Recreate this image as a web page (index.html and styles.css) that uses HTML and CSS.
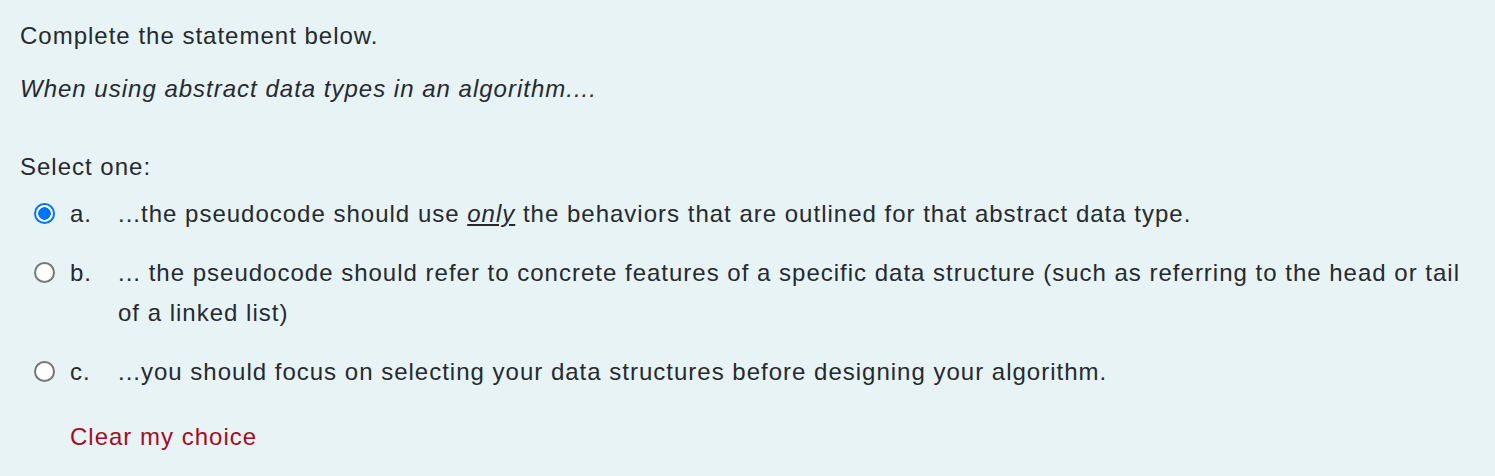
FILE: index.html
```html
<!DOCTYPE html>
<html>
<head lang="en">
    <meta charset="UTF-8">
    <title>Question</title>
    <link rel="stylesheet" href="styles.css">
</head>
<body>
    <div class="formulation">
        <div class="qtext">
            <p>Complete the statement below.</p>
            <p><em>When using abstract data types in an algorithm....</em></p>
        </div>
        <div class="ablock">
            <div class="prompt">Select one:</div>
            <div class="answer">
                <div class="row">
                    <span class="radio checked"></span>
                    <span class="letter">a.</span>
                    <div class="text">...the pseudocode should use <em><u>only</u></em> the behaviors that are outlined for that abstract data type.</div>
                </div>
                <div class="row">
                    <span class="radio"></span>
                    <span class="letter">b.</span>
                    <div class="text">... the pseudocode should refer to concrete features of a specific data structure (such as referring to the head or tail of a linked list)</div>
                </div>
                <div class="row">
                    <span class="radio"></span>
                    <span class="letter">c.</span>
                    <div class="text">...you should focus on selecting your data structures before designing your algorithm.</div>
                </div>
            </div>
            <div class="clear"><a href="#">Clear my choice</a></div>
        </div>
    </div>
</body>
</html>
```

FILE: styles.css
```css
body{
    margin: 0;
    background-color: #e7f3f5;
    font-family: "Liberation Sans", Arial, sans-serif;
    font-size: 24px;
    letter-spacing: 1px;
    color: #262a2e;
}
.formulation{
    padding: 16px 20px 0 20px;
    height: 460px;
}
.qtext p{
    margin: 0 0 13px 0;
    line-height: 40px;
}
.ablock{
    margin-top: 38px;
}
.prompt{
    line-height: 40px;
    margin-bottom: 7px;
}
.row{
    display: flex;
    align-items: flex-start;
    line-height: 40px;
    margin-bottom: 19px;
    padding-left: 14px;
}
.radio{
    flex: none;
    box-sizing: border-box;
    width: 21px;
    height: 21px;
    margin-top: 9px;
    border: 2px solid #767676;
    border-radius: 50%;
    background-color: #fff;
}
.radio.checked{
    border: 2px solid #0075ff;
    background: radial-gradient(circle, #0075ff 0 6px, #fff 6.5px);
}
.letter{
    flex: none;
    width: 48px;
    margin-left: 15px;
}
.text{
    flex: 1;
}
.clear{
    padding-left: 50px;
    line-height: 40px;
    margin-top: 25px;
}
.clear a{
    color: #a30d24;
    text-decoration: none;
}
```
